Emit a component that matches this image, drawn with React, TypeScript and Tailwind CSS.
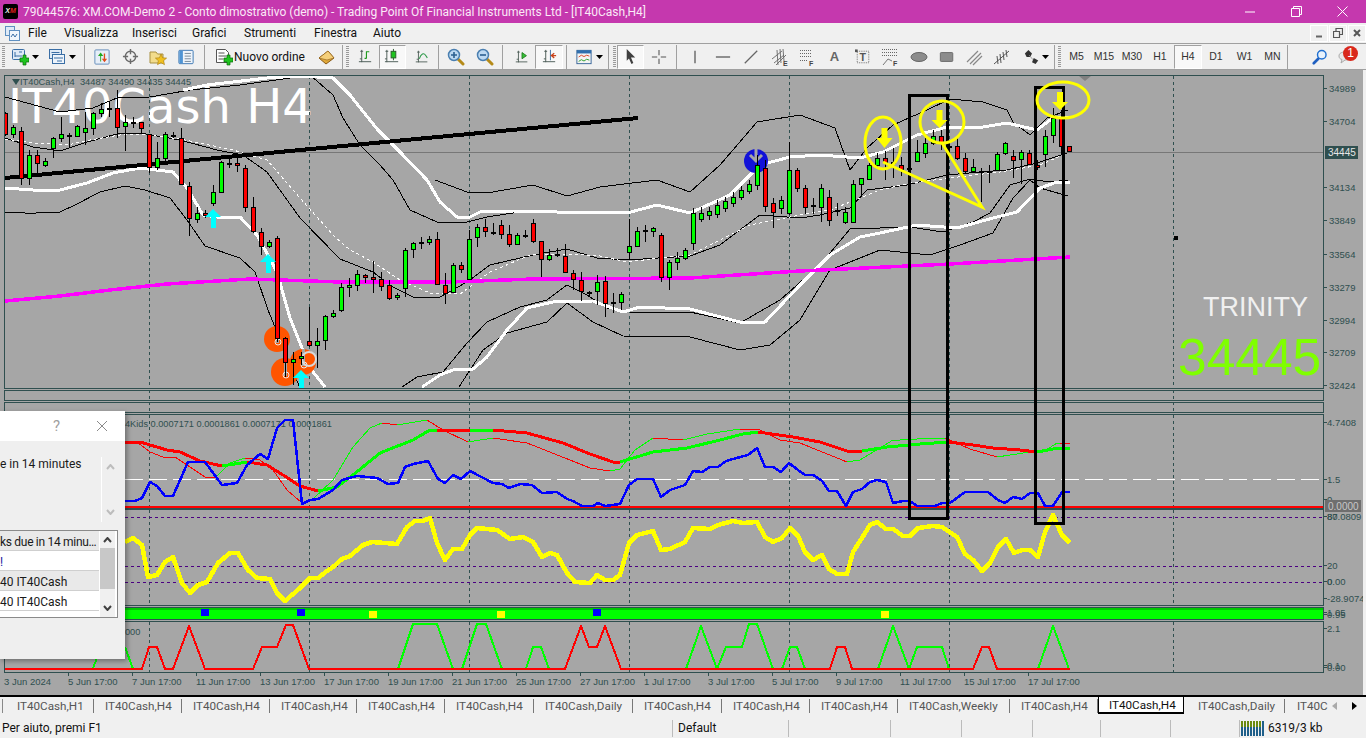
import type { ReactNode } from 'react';

// kind, high, body top, body bottom, low (screen y, one bar every 8px from x=5)
type Bar = ['g' | 'r' | 'd', number, number, number, number];
const BARS: Bar[] = [
  ['r', 112, 113, 134, 136], ['g', 125, 127, 134, 138], ['r', 127, 131, 178, 185], ['g', 150, 155, 178, 185],
  ['r', 150, 155, 163, 173], ['g', 158, 161, 165, 167], ['g', 137, 138, 148, 158], ['g', 117, 134, 138, 142],
  ['d', 133, 135, 135, 148], ['g', 125, 126, 136, 137], ['g', 112, 128, 132, 145], ['g', 112, 113, 128, 135],
  ['g', 103, 109, 113, 117], ['d', 102, 108, 108, 117], ['r', 90, 108, 127, 138], ['g', 115, 122, 126, 151],
  ['d', 117, 122, 122, 128], ['r', 122, 122, 128, 133], ['r', 134, 134, 167, 173], ['g', 142, 158, 167, 170],
  ['g', 132, 134, 158, 162], ['d', 132, 135, 135, 138], ['r', 128, 138, 184, 185], ['r', 182, 186, 218, 236],
  ['g', 207, 213, 219, 223], ['r', 210, 213, 215, 218], ['g', 185, 192, 203, 206], ['g', 161, 162, 192, 193],
  ['d', 158, 163, 163, 168], ['r', 158, 163, 165, 172], ['r', 165, 168, 207, 212], ['r', 197, 207, 231, 233],
  ['r', 228, 232, 246, 255], ['g', 240, 242, 246, 248], ['r', 236, 238, 338, 342], ['r', 337, 338, 362, 377],
  ['g', 352, 359, 362, 385], ['g', 352, 356, 358, 365], ['r', 307, 341, 345, 347], ['g', 328, 341, 345, 368],
  ['g', 315, 316, 340, 350], ['g', 310, 313, 316, 318], ['g', 283, 287, 310, 312], ['g', 278, 285, 287, 297],
  ['g', 270, 274, 285, 291], ['r', 274, 275, 277, 283], ['r', 261, 277, 279, 293], ['r', 272, 279, 286, 291],
  ['r', 280, 285, 298, 300], ['g', 293, 295, 297, 300], ['g', 248, 250, 288, 297], ['g', 242, 243, 249, 258],
  ['d', 237, 242, 242, 249], ['g', 236, 239, 242, 245], ['r', 232, 239, 284, 285], ['r', 273, 285, 293, 304],
  ['g', 263, 265, 292, 293], ['r', 262, 265, 269, 273], ['g', 230, 239, 279, 280], ['g', 224, 227, 237, 247],
  ['r', 219, 227, 231, 237], ['d', 223, 232, 232, 235], ['r', 220, 225, 234, 239], ['r', 225, 234, 244, 247],
  ['g', 233, 235, 244, 245], ['d', 230, 235, 235, 238], ['r', 219, 223, 241, 243], ['r', 241, 241, 259, 277],
  ['g', 249, 255, 259, 261], ['d', 248, 254, 254, 257], ['r', 244, 256, 272, 273], ['r', 270, 273, 279, 290],
  ['r', 272, 280, 291, 301], ['d', 291, 292, 292, 297], ['g', 275, 282, 291, 305], ['r', 276, 281, 303, 317],
  ['d', 293, 302, 302, 313], ['g', 292, 294, 302, 310], ['g', 219, 246, 252, 260], ['g', 227, 231, 246, 247],
  ['d', 225, 230, 230, 242], ['g', 227, 228, 231, 237], ['r', 233, 235, 277, 282], ['g', 260, 262, 277, 290],
  ['g', 252, 258, 262, 270], ['g', 248, 250, 258, 260], ['g', 208, 213, 243, 250], ['g', 207, 213, 219, 222],
  ['g', 207, 211, 215, 220], ['g', 200, 205, 214, 218], ['g', 197, 201, 208, 212], ['g', 192, 197, 203, 207],
  ['g', 186, 190, 197, 200], ['g', 180, 184, 191, 194], ['g', 155, 165, 185, 190], ['r', 160, 168, 206, 212],
  ['r', 198, 203, 212, 228], ['g', 196, 200, 208, 214], ['g', 142, 170, 213, 215], ['r', 168, 170, 188, 192],
  ['r', 185, 188, 207, 214], ['d', 198, 205, 205, 214], ['g', 184, 188, 207, 222], ['r', 190, 197, 220, 226],
  ['d', 203, 210, 210, 216], ['g', 207, 212, 222, 224], ['g', 180, 184, 222, 223], ['g', 178, 178, 184, 195],
  ['g', 163, 165, 179, 180], ['g', 153, 158, 165, 168], ['r', 151, 158, 162, 180], ['d', 148, 162, 162, 178],
  ['r', 157, 165, 169, 176], ['d', 160, 168, 168, 172], ['g', 140, 152, 161, 162], ['g', 138, 143, 153, 158],
  ['g', 130, 136, 143, 145], ['r', 130, 136, 142, 150], ['d', 140, 146, 146, 155], ['r', 137, 146, 158, 160],
  ['r', 153, 158, 171, 173], ['g', 159, 167, 171, 172], ['d', 168, 171, 171, 202], ['d', 165, 171, 171, 183],
  ['g', 152, 154, 170, 171], ['g', 142, 143, 153, 155], ['r', 150, 156, 160, 178], ['g', 150, 152, 159, 184],
  ['r', 150, 153, 164, 165], ['r', 160, 165, 167, 170], ['g', 130, 136, 154, 167], ['g', 108, 118, 135, 143],
  ['r', 110, 118, 146, 155], ['r', 146, 146, 151, 152],
];

const THIN = [
  '5,97 27,103 60,112 93,108 117,98 150,97 190,90 240,85 290,78 310,75 333,95 343,118 360,145 380,165 393,180 410,210 437,222 463,223 487,217 513,213 557,212 587,212',
  '435,180 467,192 487,193 533,185 567,196 600,187 657,180 690,192 720,165 757,122 800,115 835,128 850,170 867,148 893,125 927,110 950,99 983,102 1007,110 1013,122 1030,135 1047,118 1068,110',
  '5,138 33,147 60,151 87,142 117,134 140,133 180,140 217,150 243,155 267,172 300,218 340,259 373,272 393,287 413,297 440,297 467,282 490,265 533,255 567,249 597,258 627,260 690,256 720,245 760,215 800,218 820,215 850,208 867,190 907,185 947,175 980,172 1007,170 1037,163 1067,153',
  '5,212 22,212 28,214 45,212 60,212 75,205 100,192 125,186 145,190 170,198 187,220 205,246 240,258 255,272 268,310 300,388',
  '402,387 417,377 443,372 467,343 487,322 520,307 547,300 567,285 587,295 607,308 630,312 690,312 740,323 780,300 820,265 850,229 910,227 943,232 973,222 990,213 1010,185 1030,179 1050,182 1068,180',
  '459,387 483,350 507,333 547,322 567,303 593,322 623,336 690,337 740,350 770,345 800,320 830,270 850,262 880,250 930,255 960,245 993,233 1013,198 1030,180 1040,188 1068,196',
];
const THICK = [
  '5,188 33,190 60,190 87,183 113,173 140,168 173,172 187,188 203,215 217,217 240,217 257,235 277,272 290,318 310,368 325,387',
  '183,90 207,85 233,82 267,78 300,76 333,78 350,95 378,130 400,152 427,180 440,202 457,217 468,218 480,212 513,211 557,212 600,212 627,213 657,205 690,213 730,195 760,165 790,157 820,155 860,158 883,152 917,135 947,127 983,127 1007,123 1037,130 1053,118 1070,117',
  '422,387 440,375 453,370 473,369 487,357 507,330 527,308 553,302 593,301 623,312 640,307 690,309 740,322 765,322 800,285 830,255 860,237 880,233 917,225 957,228 993,218 1017,212 1040,188 1057,182 1070,182',
];
const DASHED = '5,139 33,143 67,145 90,140 120,135 140,134 180,139 233,150 267,160 300,198 333,235 350,250 373,262 400,280 430,293 460,294 490,272 530,255 567,254 600,256 627,262 660,258 690,255 750,225 800,215 830,210 860,198 880,190 910,183 950,178 1000,172 1040,165 1067,153';
const MAGENTA = '5,301 60,296 110,290 167,284 250,279 340,282 450,282 533,279 690,278 800,271 950,264 1070,257';

const BLUE = '125,501 135,501 142,498 150,482 157,486 165,496 173,496 188,462 205,462 222,485 237,483 247,465 260,454 268,459 277,428 285,420 293,420 302,504 310,500 318,499 333,490 342,480 357,476 377,478 388,484 398,483 405,467 413,464 428,461 438,479 445,483 453,475 461,479 470,471 493,483 502,484 509,488 520,484 532,485 542,493 557,492 567,499 573,501 582,506 593,506 598,503 605,506 620,504 629,485 637,479 653,479 661,497 670,490 685,485 693,471 702,472 710,467 718,467 726,461 733,459 748,455 757,448 765,467 773,467 781,472 789,463 798,470 805,475 813,475 822,481 829,491 837,491 846,506 853,492 862,489 870,482 877,480 886,482 893,503 903,501 910,501 917,506 935,506 942,503 950,503 965,492 973,492 988,492 998,500 1005,503 1013,497 1022,499 1030,493 1038,493 1045,506 1053,506 1062,492 1070,492';
const MA_RED = [
  '125,442 140,442 167,450 180,452 200,461 222,466',
  '247,462 267,465 283,475 300,486 318,491',
  '437,430 470,431',
  '493,430 527,433 563,443 590,454 613,462 620,462',
  '758,432 793,437 820,442 847,451 862,451',
  '948,442 973,445 993,448 1020,450 1037,452',
];
const MA_GREEN = [
  '222,466 247,462',
  '318,491 337,487 353,475 380,453 413,440 430,430 437,430',
  '470,431 493,430',
  '620,462 653,452 687,448 720,440 743,434 758,432',
  '862,451 887,447 920,444 948,442',
  '1037,452 1053,449 1070,448',
];
const SIG_RED = [
  '137,442 150,452 163,457 175,457 190,467 205,477 215,478',
  '245,458 260,460 273,470 287,490 302,503 312,500',
  '382,423 397,425',
  '427,420 443,430 468,442',
  '493,438 527,443 570,460 590,468 610,471',
  '653,438 683,440',
  '740,429 758,429 780,440 800,443 847,462',
  '945,438 970,449 997,457',
  '1060,443 1070,444',
];
const SIG_GREEN = [
  '215,478 230,463 245,458',
  '312,500 333,480 353,447 370,428 382,423',
  '397,425 427,420',
  '468,442 493,438',
  '610,471 620,469 635,450 653,438',
  '683,440 707,434 740,429',
  '847,462 860,460 893,440 900,440 935,438 945,438',
  '997,457 1030,452 1043,452 1057,443 1060,443',
];
const YELLOW = '125,542 133,538 142,545 148,577 157,575 165,562 173,557 182,583 190,593 198,585 207,582 218,563 230,553 238,553 248,570 257,578 270,579 277,593 285,601 300,588 310,578 318,578 327,571 333,567 342,559 350,556 363,545 372,542 397,544 407,527 415,521 423,521 430,518 437,543 445,560 453,549 462,549 470,535 477,528 497,530 510,539 523,537 533,542 542,557 550,553 557,555 567,573 575,582 590,583 597,575 605,580 613,580 620,575 629,543 637,535 653,531 661,550 670,549 685,542 693,528 710,529 718,525 733,521 743,523 757,522 765,537 773,542 782,538 790,528 798,536 805,552 813,560 822,555 829,569 837,574 847,574 853,552 862,538 870,525 877,522 886,529 893,529 903,536 910,536 918,528 933,526 942,527 957,537 965,554 973,560 982,571 990,563 998,547 1006,539 1014,553 1022,550 1030,550 1038,557 1045,532 1053,515 1062,535 1070,543';
const HIST_GREEN = [
  '93,668 97,658',
  '125,647 133,669',
  '398,669 413,624 437,624 453,669',
  '462,669 477,624 486,624 502,669',
  '526,669 533,647 541,647 549,669',
  '686,669 701,626 717,669 726,647 742,647 749,624 757,624 773,669',
  '782,669 790,647 797,647 805,669',
  '878,669 893,626 909,669 917,647 942,647 949,669',
  '1038,669 1053,626 1069,669',
];
const HIST_RED = '5,669 142,669 149,647 157,647 165,669 173,669 189,626 205,669 253,669 262,647 277,647 286,625 293,625 309,669 565,669 581,626 589,647 597,647 605,626 621,669 830,669 837,647 845,647 852,669 973,669 982,647 989,647 997,669 1070,669';

const GRID = [149, 309, 469, 629, 789, 949, 1173];
const TIME_LABELS = ['5 Jun 17:00', '7 Jun 17:00', '11 Jun 17:00', '13 Jun 17:00', '17 Jun 17:00', '19 Jun 17:00', '21 Jun 17:00', '25 Jun 17:00', '27 Jun 17:00', '1 Jul 17:00', '3 Jul 17:00', '5 Jul 17:00', '9 Jul 17:00', '11 Jul 17:00', '15 Jul 17:00', '17 Jul 17:00'];

function Line({ p, c, w = 1, dash }: { p: string; c: string; w?: number; dash?: string }) {
  return <polyline points={p} fill="none" stroke={c} strokeWidth={w} strokeDasharray={dash} strokeLinejoin="round" shapeRendering="crispEdges" />;
}

function Grid({ top, bottom }: { top: number; bottom: number }) {
  return (
    <>
      {GRID.map((x) => (
        <line key={x} x1={x + 0.5} x2={x + 0.5} y1={top} y2={bottom} stroke="#2f4f4f" strokeDasharray="3 3" shapeRendering="crispEdges" />
      ))}
    </>
  );
}

function Pane({ top, h, frame, labels, children }: { top: number; h: string; frame: number; labels?: [number, string][]; children?: ReactNode }) {
  return (
    <div className={`flex shrink-0 ${h}`}>
      <div className="ml-[4px] w-[1320px] border border-[#2f4f4f]">
        <svg className="block h-full w-full" viewBox={`5 ${top + 1} 1318 ${frame - 2}`}>{children}</svg>
      </div>
      <svg className="block h-full w-[39px] overflow-visible" viewBox={`1324 ${top} 39 ${frame}`}>
        {labels?.map(([y, t], i) => (
          <g key={i}>
            <line x1="1324" x2="1327" y1={y + 0.5} y2={y + 0.5} stroke="#2f4f4f" />
            <text x={/^\d{5}$/.test(t) ? 1329 : 1327} y={y + 4} fontSize="9.5" fill="#2f4f4f" fontFamily="Liberation Sans">{t}</text>
          </g>
        ))}
      </svg>
    </div>
  );
}

function Candles() {
  return (
    <>
      {BARS.map(([k, hi, top, bot, lo], i) => {
        const x = 5 + i * 8;
        return (
          <g key={i} shapeRendering="crispEdges">
            <line x1={x + 0.5} x2={x + 0.5} y1={hi} y2={lo} stroke="#000" />
            {k === 'd' ? (
              <rect x={x - 2} y={top} width="5" height="2" fill="#000" />
            ) : (
              <rect x={x - 1.5} y={top + 0.5} width="4" height={bot - top} fill={k === 'g' ? '#00ff00' : '#ff0000'} stroke="#000" />
            )}
          </g>
        );
      })}
    </>
  );
}

function CyanArrow({ x, y }: { x: number; y: number }) {
  return <polygon points={`${x},${y - 10} ${x + 8},${y - 2} ${x + 3},${y - 2} ${x + 3},${y + 9} ${x - 2},${y + 9} ${x - 2},${y - 2} ${x - 8},${y - 2}`} fill="#00ffff" />;
}

function OrangeMark({ x, y, r }: { x: number; y: number; r: number }) {
  return (
    <g>
      <circle cx={x} cy={y} r={r} fill="#ff5500" />
      <rect x={x - 1} y={y - r} width="3" height={r + 4} fill="#a6a6a6" />
      <circle cx={x + 1} cy={y + 3} r="3" fill="none" stroke="#e8e8e8" />
    </g>
  );
}

function MainChart() {
  return (
    <>
      <text x="8" y="123" fontSize="48" fill="#fff" fontFamily="DejaVu Sans">IT40Cash H4</text>
      <Grid top={76} bottom={388} />
      <line x1="5" x2="1323" y1="152.5" y2="152.5" stroke="#777" />
      {THIN.map((p, i) => <Line key={i} p={p} c="#000" />)}
      <Line p={DASHED} c="#fff" dash="3 3" />
      {THICK.map((p, i) => <Line key={i} p={p} c="#fff" w={3} />)}
      <Line p={MAGENTA} c="#ff00ff" w={3.5} />
      <Line p="5,178 638,118" c="#000" w={4} />
      <g>
        <circle cx="756" cy="161" r="12" fill="#1212d8" />
        <path d="M756 149v10M750 155l6 6 6-6" stroke="#a6a6a6" strokeWidth="3" fill="none" />
      </g>
      <OrangeMark x={277} y={339} r={13} />
      <OrangeMark x={285} y={372} r={14} />
      <OrangeMark x={303} y={362} r={13} />
      <circle cx="309" cy="359" r="7" fill="none" stroke="#d8d8d8" strokeWidth="2" />
      <Candles />
      <CyanArrow x={213} y={219} />
      <CyanArrow x={268} y={264} />
      <CyanArrow x={301} y={380} />
      <rect x="1174" y="236" width="4" height="4" fill="#000" />
      <text x="1203" y="316" fontSize="27" fill="#f0f0f0" fontFamily="Liberation Sans">TRINITY</text>
      <text x="1178" y="375" fontSize="51.500" fill="#7fff00" fontFamily="Liberation Sans">34445</text>
      <polygon points="1079,76 1091,76 1085,81" fill="#808080" />
    </>
  );
}

function LabelText({ x, y, children }: { x: number; y: number; children: ReactNode }) {
  return <text x={x} y={y} fontSize="9.2" fill="#2f4f4f" fontFamily="Liberation Sans">{children}</text>;
}

function Annotations() {
  const yellow = '#ffff00';
  return (
    <svg className="pointer-events-none absolute inset-0 h-full w-full" viewBox="0 70 1366 625">
      <rect x="909.5" y="95" width="38" height="423" fill="none" stroke="#000" strokeWidth="3" shapeRendering="crispEdges" />
      <rect x="1035" y="87" width="28" height="436" fill="none" stroke="#000" strokeWidth="3" shapeRendering="crispEdges" />
      <ellipse cx="883" cy="143" rx="18" ry="26" fill="none" stroke={yellow} strokeWidth="3" />
      <ellipse cx="942" cy="122" rx="22" ry="21" fill="none" stroke={yellow} strokeWidth="3" />
      <ellipse cx="1063" cy="100" rx="26" ry="18" fill="none" stroke={yellow} strokeWidth="3" />
      <polyline points="883,162 982,207 942,143" fill="none" stroke={yellow} strokeWidth="3" />
      <polygon points="881.500,128 887.500,128 887.500,138 892.500,138 884.500,148 876.500,138 881.500,138" fill={yellow} />
      <polygon points="936.500,110 942.500,110 942.500,120 947.500,120 939.500,128 931.500,120 936.500,120" fill={yellow} />
      <polygon points="1057,92 1063,92 1063,102 1068,102 1060,110 1052,102 1057,102" fill={yellow} />
    </svg>
  );
}

function Dialog() {
  return (
    <div className="absolute left-0 top-[341px] flex h-[248px] w-[125px] flex-col bg-[#efefef] font-['Roboto',sans-serif] text-[12px] text-[#1a1a1a] shadow-[2px_2px_5px_rgba(0,0,0,0.35)]">
      <div className="flex h-[30px] shrink-0 items-center bg-white">
        <span className="ml-[53px] w-[43px] text-[15px] text-[#a0a0a0]">?</span>
        <svg className="h-[12px] w-[12px]" viewBox="0 0 12 12"><path d="M1 1l10 10M11 1L1 11" stroke="#8a8a8a" /></svg>
      </div>
      <div className="mt-[16px] flex h-[65px] shrink-0">
        <div className="w-[101px] leading-[14px] whitespace-nowrap">e in 14 minutes</div>
        <div className="flex w-[18px] flex-col items-center justify-between border-l border-white py-[7px] text-[#bdbdbd]">
          <svg className="h-[6px] w-[9px]" viewBox="0 0 9 6"><path d="M1 5l3.5-4L8 5" fill="none" stroke="currentColor" strokeWidth="2" /></svg>
          <svg className="h-[6px] w-[9px]" viewBox="0 0 9 6"><path d="M1 1l3.5 4L8 1" fill="none" stroke="currentColor" strokeWidth="2" /></svg>
        </div>
      </div>
      <div className="mt-[8px] flex h-[88px] w-[118px] shrink-0 overflow-hidden border-y border-r border-[#8a8a8a] bg-white">
        <div className="w-[99px] overflow-hidden whitespace-nowrap">
          <div className="h-[20px] border-b border-[#cfcfcf] bg-[#e9e9e9] leading-[22px] tracking-[-0.3px]">ks due in 14 minu…</div>
          <div className="h-[20px] border-b border-[#cfcfcf] leading-[22px] text-[#1a1aa0]">!</div>
          <div className="h-[20px] border-b border-[#cfcfcf] bg-[#e9e9e9] leading-[22px]">40 IT40Cash</div>
          <div className="h-[20px] border-b border-[#cfcfcf] leading-[22px]">40 IT40Cash</div>
        </div>
        <div className="flex w-[16px] flex-col border-l border-white bg-[#f0f0f0]">
          <div className="flex h-[17px] items-center justify-center">
            <svg className="h-[6px] w-[9px]" viewBox="0 0 9 6"><path d="M1 5l3.5-4L8 5" fill="none" stroke="#404040" strokeWidth="2" /></svg>
          </div>
          <div className="h-[41px] bg-[#c8c8c8]" />
          <div className="flex flex-1 items-end justify-center pb-[6px]">
            <svg className="h-[6px] w-[9px]" viewBox="0 0 9 6"><path d="M1 1l3.5 4L8 1" fill="none" stroke="#404040" strokeWidth="2" /></svg>
          </div>
        </div>
      </div>
    </div>
  );
}

function Chart() {
  return (
    <div className="relative flex h-[625px] shrink-0 flex-col bg-[#a6a6a6] pt-[5px]">
      <div className="absolute bottom-0 right-0 top-0 w-[3px] bg-[#f0f0f0]" />
      <Pane top={75} frame={314} h="h-[314px]" labels={[[88, '34989'], [121, '34704'], [187, '34134'], [220, '33849'], [254, '33564'], [287, '33279'], [320, '32994'], [352, '32709'], [385, '32424']]}>
        <MainChart />
      </Pane>
      <svg className="pointer-events-none absolute left-[1324px] top-[76px] h-[13px] w-[36px]" viewBox="0 0 36 13">
        <rect x="1" width="33" height="13" fill="#2f4f4f" />
        <text x="4" y="10" fontSize="10" fill="#e6e6e6" fontFamily="Liberation Sans">34445</text>
      </svg>
      <svg className="absolute left-[12px] top-[9px] h-[6px] w-[8px]" viewBox="0 0 8 6"><polygon points="0,0 8,0 4,6" fill="#2f4f4f" /></svg>
      <div className="absolute left-[20px] top-[6px] font-['Liberation_Sans',sans-serif] text-[9.3px] leading-[12px] text-[#2f4f4f]">IT40Cash,H4&nbsp;&nbsp;34487 34490 34435 34445</div>
      <div className="mt-px"><Pane top={390} frame={11} h="h-[11px]"><Grid top={390} bottom={400} /></Pane></div>
      <div className="mt-px"><Pane top={402} frame={11} h="h-[11px]"><Grid top={402} bottom={412} /></Pane></div>
      <div className="mt-px">
        <Pane top={414} frame={95} h="h-[95px]" labels={[[422, '4.7408'], [479, '1.5'], [499, '0']]}>
          <LabelText x={125} y={427}>4Kids 0.0007171 0.0001861 0.0007171 0.0001861</LabelText>
          <Grid top={415} bottom={508} />
          <line x1="5" x2="1323" y1="479.5" y2="479.5" stroke="#fff" strokeDasharray="18 6" />
          <line x1="5" x2="1323" y1="507" y2="507" stroke="#ff0000" strokeWidth="2" />
          {SIG_RED.map((p, i) => <Line key={i} p={p} c="#ff0000" />)}
          {SIG_GREEN.map((p, i) => <Line key={i} p={p} c="#00ff00" />)}
          {MA_RED.map((p, i) => <Line key={i} p={p} c="#ff0000" w={3} />)}
          {MA_GREEN.map((p, i) => <Line key={i} p={p} c="#00ff00" w={3} />)}
          <Line p={BLUE} c="#0000ff" w={2.5} />
        </Pane>
      </div>
      <svg className="pointer-events-none absolute left-[1324px] top-[430px] h-[12px] w-[38px]" viewBox="0 0 38 12">
        <rect x="1" width="36" height="12" fill="#6e6e6e" />
        <text x="4" y="10" fontSize="10" fill="#c8c8c8" fontFamily="Liberation Sans">0.0000</text>
      </svg>
      <Pane top={509} frame={97} h="h-[97px]" labels={[[516, '80'], [516, '87.0809'], [565, '20'], [581, '0'], [581, '0.00'], [598, '-28.9074']]}>
        <Grid top={510} bottom={605} />
        {[517, 566, 582].map((y) => (
          <line key={y} x1="5" x2="1323" y1={y + 0.5} y2={y + 0.5} stroke="#4b0082" strokeDasharray="3 3" />
        ))}
        <Line p={YELLOW} c="#ffff00" w={4.5} />
      </Pane>
      <div className="mt-px">
        <Pane top={607} frame={13} h="h-[13px]" labels={[[612, '1.05'], [614, '0.95']]}>
          <rect x="5" y="608" width="1318" height="11" fill="#00ff00" />
          <rect x="5" y="608" width="1318" height="2" fill="#00c800" />
          {[201, 297, 593].map((x) => <rect key={x} x={x} y="609" width="8" height="7" fill="#0000ff" />)}
          {[369, 497, 881].map((x) => <rect key={x} x={x} y="611" width="8" height="7" fill="#ffff00" />)}
        </Pane>
      </div>
      <div className="mt-px">
        <Pane top={621} frame={52} h="h-[52px]" labels={[[628, '2.1'], [665, '0.1'], [667, '0.00']]}>
          <LabelText x={125} y={635}>000</LabelText>
          <Grid top={622} bottom={672} />
          {HIST_GREEN.map((p, i) => <Line key={i} p={p} c="#00ff00" w={2} />)}
          <Line p={HIST_RED} c="#ff0000" w={2} />
        </Pane>
      </div>
      <svg className="h-[22px] w-[1363px] shrink-0" viewBox="0 673 1363 22">
        <text x="4" y="685" fontSize="9.5" fill="#2f4f4f" fontFamily="Liberation Sans">3 Jun 2024</text>
        {TIME_LABELS.map((t, i) => (
          <g key={t}>
            <line x1={68.5 + i * 64} x2={68.5 + i * 64} y1="673" y2="676" stroke="#2f4f4f" />
            <text x={68 + i * 64} y="685" fontSize="9.5" fill="#2f4f4f" fontFamily="Liberation Sans">{t}</text>
          </g>
        ))}
      </svg>
      <Annotations />
      <Dialog />
    </div>
  );
}

function Caret() {
  return <svg className="h-[4px] w-[7px] shrink-0" viewBox="0 0 7 4"><polygon points="0,0 7,0 3.5,4" fill="#000" /></svg>;
}

function Sep({ w }: { w: string }) {
  return <div className={`flex h-[24px] shrink-0 justify-center ${w}`}><div className="h-full w-px bg-[#a0a0a0]" /></div>;
}

function Grip({ w }: { w: string }) {
  return (
    <div className={`flex shrink-0 justify-center ${w}`}>
      <div className="h-[22px] w-[3px] bg-[repeating-linear-gradient(to_bottom,#9a9a9a_0px,#9a9a9a_1px,transparent_1px,transparent_2px)]" />
    </div>
  );
}

function Slot({ w, active, children }: { w: string; active?: boolean; children: ReactNode }) {
  return (
    <div className={`flex h-[24px] shrink-0 items-center justify-center ${w} ${active ? 'border border-t-[#a0a0a0] border-l-[#a0a0a0] border-r-white border-b-white bg-[#f8f8f8]' : ''}`}>
      {children}
    </div>
  );
}

function Ico({ s = 18, children }: { s?: number; children: ReactNode }) {
  return <svg width={s} height={s} viewBox="0 0 18 18" className="shrink-0">{children}</svg>;
}

const GreenPlus = ({ x, y }: { x: number; y: number }) => (
  <path d={`M${x} ${y - 5}h3v3h3v4h-3v3h-3v-3h-3v-4h3z`} transform={`translate(-1 0)`} fill="#1fc41f" stroke="#0a6a0a" strokeWidth="0.7" />
);

const Axes = () => <path d="M5 2v13M2 14.5h13M3.5 3.5h3M3 11.5h2" stroke="#4a5a55" fill="none" />;

function ToolIcons() {
  return {
    newChart: (
      <Ico>
        <rect x="1.5" y="1.5" width="12" height="10" rx="1" fill="#dfeaf6" stroke="#3a6ea5" />
        <path d="M4 4v5M4 8h7M8 4h3" stroke="#3a6ea5" fill="none" />
        <GreenPlus x={13} y={12} />
      </Ico>
    ),
    profiles: (
      <Ico>
        <rect x="1.5" y="1.5" width="12" height="9" fill="#dfeaf6" stroke="#3a6ea5" />
        <rect x="4.5" y="6.5" width="12" height="9" fill="#eef4fb" stroke="#3a6ea5" />
        <path d="M6 10h9M9 13h5M3.5 4.5h8" stroke="#3a6ea5" />
      </Ico>
    ),
    market: (
      <Ico s={16}>
        <rect x="1" y="1" width="16" height="16" rx="1" fill="#e6eef8" stroke="#5b86b8" />
        <path d="M7 14V8H4.5L7.5 4l3 4H8v6z" fill="#1fa81f" />
        <path d="M11 5v6H8.8l3 4 3-4H12.5V5z" fill="#e04a1a" />
      </Ico>
    ),
    data: (
      <Ico s={17}>
        <circle cx="9" cy="9" r="5.5" fill="none" stroke="#6b6b6b" strokeWidth="1.5" />
        <path d="M9 1v5.5M9 11.5V17M1 9h5.5M11.5 9H17" stroke="#6b6b6b" strokeWidth="1.5" />
      </Ico>
    ),
    navigator: (
      <Ico>
        <path d="M1 4h6l1.5 2H14v9H1z" fill="#f2dc8c" stroke="#a89040" />
        <polygon points="12,6 13.6,9.8 17.6,10.1 14.6,12.7 15.5,16.7 12,14.6 8.5,16.7 9.4,12.7 6.4,10.1 10.4,9.8" fill="#f0c020" stroke="#a87a10" strokeWidth="0.6" />
      </Ico>
    ),
    terminal: (
      <Ico s={16}>
        <rect x="1" y="1.5" width="16" height="15" rx="1" fill="#eef4fb" stroke="#2f6fae" />
        <rect x="1.5" y="2" width="4" height="14" fill="#4f94d4" />
        <path d="M7.5 5h7M7.5 8h7M7.5 11h7M7.5 14h7" stroke="#6d7f8f" />
      </Ico>
    ),
    order: (
      <Ico>
        <path d="M1.5 1.5h9l3 3v10h-12z" fill="#fff" stroke="#555" />
        <path d="M3.5 5h6M3.5 8h8M3.5 11h5" stroke="#555" />
        <GreenPlus x={13} y={12} />
      </Ico>
    ),
    gold: (
      <Ico>
        <path d="M1 10l9-7 6 7-8 6z" fill="#e0a93a" stroke="#8a5a15" />
        <path d="M10 3l6 7-7 2-8-2z" fill="#f5cf7a" stroke="#8a5a15" strokeWidth="0.6" />
      </Ico>
    ),
    bars: (
      <Ico s={17}>
        <Axes />
        <path d="M10 11V4h3M10 11H8" stroke="#1f9a1f" fill="none" strokeWidth="1.2" />
      </Ico>
    ),
    candles: (
      <Ico s={17}>
        <path d="M3 2v13M1 14.5h14M1.5 3.5h3M1 11.5h2" stroke="#4a5a55" fill="none" />
        <path d="M10 1v12" stroke="#2a5a2a" />
        <rect x="7.5" y="3.5" width="5" height="7" fill="#1fc41f" stroke="#2a5a2a" />
      </Ico>
    ),
    line: (
      <Ico s={16}>
        <Axes />
        <path d="M6 11c2-6 5-7 7-4l2 3" stroke="#2d9a4a" fill="none" strokeWidth="1.2" />
      </Ico>
    ),
    zoomIn: (
      <Ico>
        <path d="M11 11l5 5" stroke="#b58a18" strokeWidth="3" strokeLinecap="round" />
        <circle cx="7" cy="7" r="5.5" fill="#bcd9f2" stroke="#4a7fb0" strokeWidth="1.5" />
        <path d="M4 7h6M7 4v6" stroke="#2a5f90" strokeWidth="1.6" />
      </Ico>
    ),
    zoomOut: (
      <Ico>
        <path d="M11 11l5 5" stroke="#b58a18" strokeWidth="3" strokeLinecap="round" />
        <circle cx="7" cy="7" r="5.5" fill="#bcd9f2" stroke="#4a7fb0" strokeWidth="1.5" />
        <path d="M4 7h6" stroke="#2a5f90" strokeWidth="1.6" />
      </Ico>
    ),
    shift: (
      <Ico s={16}>
        <Axes />
        <path d="M9 4v7l5-3.5z" fill="#35c035" stroke="#1f7a1f" />
      </Ico>
    ),
    scroll: (
      <Ico s={17}>
        <Axes />
        <path d="M10 2v11" stroke="#3a6ea5" />
        <path d="M16 8h-4M14 5.5L11 8l3 2.5" stroke="#c8421a" fill="none" strokeWidth="1.4" />
      </Ico>
    ),
    template: (
      <Ico s={16}>
        <rect x="1" y="1.5" width="16" height="15" fill="#f4f4f4" stroke="#2f5f95" />
        <rect x="1" y="1.5" width="16" height="3.5" fill="#2f6fae" />
        <path d="M3 9l3-2 3 1.5 3-1.5 3 1" stroke="#d63a1a" fill="none" />
        <path d="M3 14l3-2 3 1.5 3-2 3 1" stroke="#1f9a1f" fill="none" />
      </Ico>
    ),
    cursor: (
      <Ico s={17}>
        <path d="M5 1l9 9H9.5l2.5 6-2 1-2.6-6L5 13.5z" fill="#404040" />
      </Ico>
    ),
    cross: (
      <Ico s={16}>
        <path d="M9 1v6M9 11v6M1 9h6M11 9h6" stroke="#555" strokeWidth="1.2" />
      </Ico>
    ),
    vline: <Ico s={16}><path d="M9 2v14" stroke="#555" strokeWidth="1.4" /></Ico>,
    hline: <Ico s={16}><path d="M1 9h16" stroke="#555" strokeWidth="1.4" /></Ico>,
    trend: <Ico s={16}><path d="M2 16L16 2" stroke="#666" strokeWidth="1.4" /></Ico>,
    channel: (
      <Ico>
        <path d="M1 11l10-8M3 15l10-8M5 17L15 7M6 2l1 15M9 1l1 14M12 1l1 12" stroke="#666" strokeWidth="0.9" />
        <text x="12" y="17.5" fontSize="7" fontWeight="700" fill="#444" fontFamily="Liberation Sans">E</text>
      </Ico>
    ),
    fib: (
      <Ico>
        <path d="M2 2.5h12M2 5.5h12M2 8.5h12M2 12.5h8" stroke="#666" strokeDasharray="1 1" />
        <text x="11" y="17.5" fontSize="7" fontWeight="700" fill="#444" fontFamily="Liberation Sans">F</text>
      </Ico>
    ),
    fan: (
      <Ico>
        <path d="M1 1.5h15M1 4.5h15M1 7.5h15" stroke="#666" strokeDasharray="1 1" />
        <path d="M2 17l5-6 4 2" stroke="#777" fill="none" />
        <text x="12" y="17.5" fontSize="7" fontWeight="700" fill="#444" fontFamily="Liberation Sans">F</text>
      </Ico>
    ),
    label: (
      <Ico s={16}>
        <rect x="2.5" y="2.5" width="13" height="13" fill="none" stroke="#666" strokeDasharray="1 1" />
        <rect x="0" y="0.5" width="3" height="3" fill="#555" />
        <text x="5" y="14" fontSize="12" fontWeight="700" fill="#555" fontFamily="Liberation Sans">T</text>
      </Ico>
    ),
    ellipse: <Ico><ellipse cx="9" cy="9" rx="8" ry="4.5" fill="#8c8c8c" stroke="#666" /></Ico>,
    rect: <Ico s={16}><rect x="1.5" y="4" width="14" height="10" rx="1" fill="#8c8c8c" stroke="#666" /></Ico>,
    parallel: <Ico><path d="M1 14L12 3M4 16L15 5M7 17L16 8" stroke="#888" strokeWidth="1.2" /></Ico>,
    pitch: <Ico><path d="M1 16L16 3M4 8l1 8M7 6l1 9M10 4l1 8M13 2l1 7" stroke="#555" /></Ico>,
    arrows: (
      <Ico s={16}>
        <polygon points="5,1 9,5 7,9 3,9 1,5" fill="#333" />
        <path d="M6 7l4 5" stroke="#999" />
        <polygon points="11,10 16,13 13,17 9,15" fill="#333" />
      </Ico>
    ),
    search: (
      <Ico s={16}>
        <path d="M7 11l-5 5" stroke="#1f5fc0" strokeWidth="3" strokeLinecap="round" />
        <circle cx="11" cy="6.5" r="4.8" fill="#e8f2fc" stroke="#1f6fd0" strokeWidth="1.6" />
      </Ico>
    ),
  };
}

function Toolbar() {
  const i = ToolIcons();
  const tf = [['M5', 'w-[27px]'], ['M15', 'w-[28px]'], ['M30', 'w-[28px]'], ['H1', 'w-[28px]'], ['H4', 'w-[28px]'], ['D1', 'w-[28px]'], ['W1', 'w-[29px]'], ['MN', 'w-[27px]']];
  return (
    <div className="flex h-[27px] shrink-0 items-center border-y border-[#a0a0a0] bg-[#f0f0f0] font-['Roboto',sans-serif] text-[12px]">
      <Grip w="w-[7px]" />
      <div className="flex w-[34px] shrink-0 items-center pl-[4px]">{i.newChart}<span className="ml-[3px]"><Caret /></span></div>
      <div className="flex w-[37px] shrink-0 items-center pl-[7px]">{i.profiles}<span className="ml-[3px]"><Caret /></span></div>
      <Sep w="w-[12px]" />
      <Slot w="w-[23px]">{i.market}</Slot>
      <Slot w="w-[34px]">{i.data}</Slot>
      <Slot w="w-[22px]">{i.navigator}</Slot>
      <Slot w="w-[33px]">{i.terminal}</Slot>
      <Sep w="w-[4px]" />
      <div className="flex w-[106px] shrink-0 items-center pl-[9px] text-[#111]">{i.order}<span className="ml-[1px] whitespace-nowrap">Nuovo ordine</span></div>
      <Slot w="w-[30px]">{i.gold}</Slot>
      <Sep w="w-[1px]" />
      <Grip w="w-[8px]" />
      <Slot w="w-[28px]">{i.bars}</Slot>
      <Slot w="w-[27px]" active>{i.candles}</Slot>
      <Slot w="w-[31px]">{i.line}</Slot>
      <Sep w="w-[2px]" />
      <Slot w="w-[34px]">{i.zoomIn}</Slot>
      <Slot w="w-[23px]">{i.zoomOut}</Slot>
      <Sep w="w-[12px]" />
      <Slot w="w-[27px]">{i.shift}</Slot>
      <Slot w="w-[28px]" active>{i.scroll}</Slot>
      <Sep w="w-[6px]" />
      <div className="flex w-[36px] shrink-0 items-center pl-[7px]">{i.template}<span className="ml-[4px]"><Caret /></span></div>
      <Sep w="w-[6px]" />
      <Grip w="w-[6px]" />
      <Slot w="w-[27px]" active>{i.cursor}</Slot>
      <Slot w="w-[29px]">{i.cross}</Slot>
      <Sep w="w-[6px]" />
      <Slot w="w-[31px]">{i.vline}</Slot>
      <Slot w="w-[26px]">{i.hline}</Slot>
      <Slot w="w-[30px]">{i.trend}</Slot>
      <Slot w="w-[28px]">{i.channel}</Slot>
      <Slot w="w-[26px]">{i.fib}</Slot>
      <Slot w="w-[29px]"><span className="font-['Liberation_Sans',sans-serif] text-[13px] font-bold text-[#666]">A</span></Slot>
      <Slot w="w-[27px]">{i.label}</Slot>
      <Slot w="w-[28px]">{i.fan}</Slot>
      <Slot w="w-[29px]">{i.ellipse}</Slot>
      <Slot w="w-[28px]">{i.rect}</Slot>
      <Slot w="w-[27px]">{i.parallel}</Slot>
      <Slot w="w-[28px]">{i.pitch}</Slot>
      <div className="flex w-[36px] shrink-0 items-center pl-[8px]">{i.arrows}<span className="ml-[2px]"><Caret /></span></div>
      <Sep w="w-[4px]" />
      <Grip w="w-[7px]" />
      {tf.map(([t, w]) => (
        <Slot key={t} w={w} active={t === 'H4'}>
          <span className="font-['Liberation_Sans',sans-serif] text-[10.5px] text-[#333]">{t}</span>
        </Slot>
      ))}
      <Sep w="w-[3px]" />
      <div className="relative ml-[23px] flex shrink-0 items-center">
        {i.search}
        <svg className="ml-[9px] h-[16px] w-[16px]" viewBox="0 0 16 16"><path d="M2 7c0-3 3-4 6-4s6 1 6 4-3 4-6 4l-4 3 1-3.500C3 10 2 9 2 7z" fill="#e8e8e8" stroke="#aaa" /></svg>
        <span className="absolute left-[31px] top-[-3px] flex h-[15px] w-[15px] items-center justify-center rounded-full bg-[#d9291c] font-['Liberation_Sans',sans-serif] text-[12px] leading-none text-white">1</span>
      </div>
    </div>
  );
}

function TitleBar() {
  return (
    <div className="flex h-[23px] shrink-0 items-center bg-[#c538ae] font-['Roboto',sans-serif] text-[12px] text-[#fbe9f7]">
      <div className="ml-[3px] flex h-[15px] w-[15px] items-center justify-center rounded-[2px] bg-black font-['Liberation_Sans',sans-serif] text-[7px] font-bold italic text-[#f0f0f0]">
        X<span className="text-[#e02020]">M</span>
      </div>
      <span className="ml-[5px] flex-1 whitespace-nowrap">79044576: XM.COM-Demo 2 - Conto dimostrativo (demo) - Trading Point Of Financial Instruments Ltd - [IT40Cash,H4]</span>
      <div className="flex h-full w-[46px] items-center justify-center"><svg className="h-[2px] w-[10px]" viewBox="0 0 10 2"><path d="M0 1h10" stroke="#fff" /></svg></div>
      <div className="flex h-full w-[46px] items-center justify-center"><svg className="h-[11px] w-[11px]" viewBox="0 0 11 11"><path d="M.5 2.500h8v8h-8zM2.500 2.500v-2h8v8h-2" fill="none" stroke="#fff" /></svg></div>
      <div className="mr-px flex h-full w-[46px] items-center justify-center"><svg className="h-[11px] w-[11px]" viewBox="0 0 11 11"><path d="M.5.5l10 10M10.500.5l-10 10" stroke="#fff" /></svg></div>
    </div>
  );
}

function MdiButton({ children }: { children: ReactNode }) {
  return <div className="flex h-[17px] w-[18px] items-center justify-center border border-white">{children}</div>;
}

function MenuBar() {
  const items: [string, string][] = [['File', 'w-[36px]'], ['Visualizza', 'w-[68px]'], ['Inserisci', 'w-[60px]'], ['Grafici', 'w-[52px]'], ['Strumenti', 'w-[70px]'], ['Finestra', 'w-[59px]'], ['Aiuto', 'w-[40px]']];
  return (
    <div className="flex h-[20px] shrink-0 items-center bg-[#f0f0f0] font-['Roboto',sans-serif] text-[12px] text-[#111]">
      <svg className="ml-[5px] h-[15px] w-[15px] shrink-0" viewBox="0 0 15 15">
        <rect x="0.5" y="0.5" width="9" height="9" fill="#dfeaf6" stroke="#5f8fc0" />
        <rect x="4.5" y="4.5" width="10" height="10" fill="#f2f7fc" stroke="#5f8fc0" />
        <path d="M6 11l2-3 2 3 2-3" stroke="#3a6ea5" fill="none" />
      </svg>
      <div className="ml-[8px] flex flex-1">
        {items.map(([m, w]) => <span key={m} className={w}>{m}</span>)}
      </div>
      <div className="flex gap-px">
        <MdiButton><svg className="h-[10px] w-[10px]" viewBox="0 0 10 10"><path d="M2 8.500h6" stroke="#666" strokeWidth="2" /></svg></MdiButton>
        <MdiButton><svg className="h-[10px] w-[10px]" viewBox="0 0 10 10"><path d="M.5 3.500h6v6h-6zM3 3V.5h6.500v6H7" fill="none" stroke="#555" strokeWidth="1.2" /></svg></MdiButton>
        <MdiButton><svg className="h-[10px] w-[10px]" viewBox="0 0 10 10"><path d="M2 2l6 6M8 2l-6 6" stroke="#555" strokeWidth="2" /></svg></MdiButton>
      </div>
    </div>
  );
}

function Tabs() {
  const tabs: [string, string, boolean?][] = [
    ['IT40Cash,H1', 'w-[88px]'], ['IT40Cash,H4', 'w-[88px]'], ['IT40Cash,H4', 'w-[88px]'], ['IT40Cash,H4', 'w-[87px]'],
    ['IT40Cash,H4', 'w-[88px]'], ['IT40Cash,H4', 'w-[89px]'], ['IT40Cash,Daily', 'w-[99px]'], ['IT40Cash,H4', 'w-[89px]'],
    ['IT40Cash,H4', 'w-[88px]'], ['IT40Cash,H4', 'w-[88px]'], ['IT40Cash,Weekly', 'w-[112px]'], ['IT40Cash,H4', 'w-[88px]'],
  ];
  return (
    <div className="flex h-[21px] shrink-0 border-t-2 border-black bg-[#f0f0f0] font-['Roboto',sans-serif] text-[11.7px] text-[#555]">
      <div className="ml-[2px] mt-[2px] h-[14px] w-[4px] border-l border-[#888]" />
      {tabs.map(([t, w], i) => (
        <div key={i} className={`${w} mt-[2px] h-[14px] shrink-0 whitespace-nowrap border-r border-[#777] pl-[11px] leading-[14px]`}>{t}</div>
      ))}
      <div className="h-[17px] w-[86px] shrink-0 border-x border-b-2 border-black bg-white pl-[10px] text-[#111]">IT40Cash,H4</div>
      <div className="mt-[2px] h-[14px] w-[101px] shrink-0 border-r border-[#777] pl-[14px] leading-[14px]">IT40Cash,Daily</div>
      <div className="mt-[2px] h-[14px] w-[45px] shrink-0 overflow-hidden whitespace-nowrap pl-[12px] leading-[14px]">IT40C</div>
      <svg className="ml-[2px] mt-[5px] h-[8px] w-[5px]" viewBox="0 0 5 8"><polygon points="5,0 5,8 0,4" fill="#aaa" /></svg>
      <svg className="ml-[15px] mt-[5px] h-[8px] w-[5px]" viewBox="0 0 5 8"><polygon points="0,0 0,8 5,4" fill="#000" /></svg>
    </div>
  );
}

function StatusBar() {
  const cells = ['w-[116px]', 'w-[102px]', 'w-[71px]', 'w-[71px]', 'w-[68px]', 'w-[70px]', 'w-[69px]'];
  return (
    <div className="flex h-[22px] flex-1 items-center bg-[#f0f0f0] pt-[2px] font-['Roboto',sans-serif] text-[12px] text-[#111]">
      <div className="w-[672px] shrink-0 pl-[2px]">Per aiuto, premi F1</div>
      {cells.map((w, i) => (
        <div key={w + i} className={`${w} h-[17px] shrink-0 border-l border-[#bbb] pl-[5px] leading-[17px]`}>{i === 0 ? 'Default' : ''}</div>
      ))}
      <div className="flex h-[17px] items-center border-l border-[#bbb] pl-px">
        <svg className="h-[15px] w-[24px]" viewBox="0 0 24 15">
          {[0, 3, 6, 9, 12, 15, 18, 21].map((x, i) => (
            <g key={x}>
              <rect x={x} y="0" width="2" height="6" fill={i < 7 ? '#6a8a10' : '#1f5f8a'} />
              <rect x={x} y="6" width="2" height="9" fill="#1f5f8a" />
            </g>
          ))}
        </svg>
        <span className="ml-[3px] whitespace-nowrap">6319/3 kb</span>
      </div>
    </div>
  );
}

export default function App() {
  return (
    <div className="flex h-[738px] w-[1366px] flex-col overflow-hidden">
      <TitleBar />
      <MenuBar />
      <Toolbar />
      <Chart />
      <Tabs />
      <StatusBar />
    </div>
  );
}
